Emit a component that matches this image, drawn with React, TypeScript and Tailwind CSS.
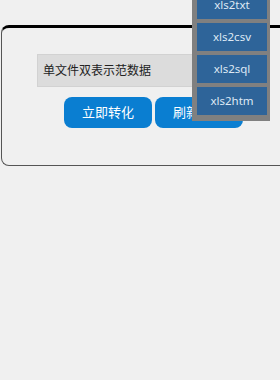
import React from 'react';

const formats = ['xls2txt', 'xls2csv', 'xls2sql', 'xls2htm'];

export default function App() {
  return (
    <div
      className="relative w-[280px] h-[380px] overflow-hidden bg-[#f0f0f0]"
      style={{ fontFamily: '"Noto Sans", "Noto Sans CJK SC", sans-serif' }}
    >
      <div className="pt-[25px] pl-[1px]">
        <div className="w-[303px] h-[141px] rounded-lg border-t-[3px] border-l border-b border-t-black border-l-[#555] border-b-[#555] bg-[#f0f0f0] pt-[26px] pl-[35px]">
          <div className="w-[233px] h-[33px] bg-[#dcdcdc] border border-[#d2d2d2] flex items-center px-[5px] text-[12px] text-[#222]">
            单文件双表示范数据
          </div>
          <div className="flex gap-[3px] mt-[10px] ml-[27px]">
            <button className="w-[88px] h-[31px] rounded-lg bg-[#0a7ed1] text-white text-[13px]">立即转化</button>
            <button className="w-[88px] h-[31px] rounded-lg bg-[#0a7ed1] text-white text-[13px]">刷新数据</button>
          </div>
        </div>
      </div>

      {/* dropdown menu */}
      <div className="absolute left-[192px] top-[-12px] w-[78px] bg-[#808080] pl-[5px] pr-[3px] pt-[3px] pb-[6px] flex flex-col gap-[4px]">
        {formats.map((f) => (
          <div key={f} className="h-[28px] bg-[#2e6499] text-[#dfe9f5] text-[11.5px] flex items-center justify-center">
            {f}
          </div>
        ))}
      </div>
    </div>
  );
}
